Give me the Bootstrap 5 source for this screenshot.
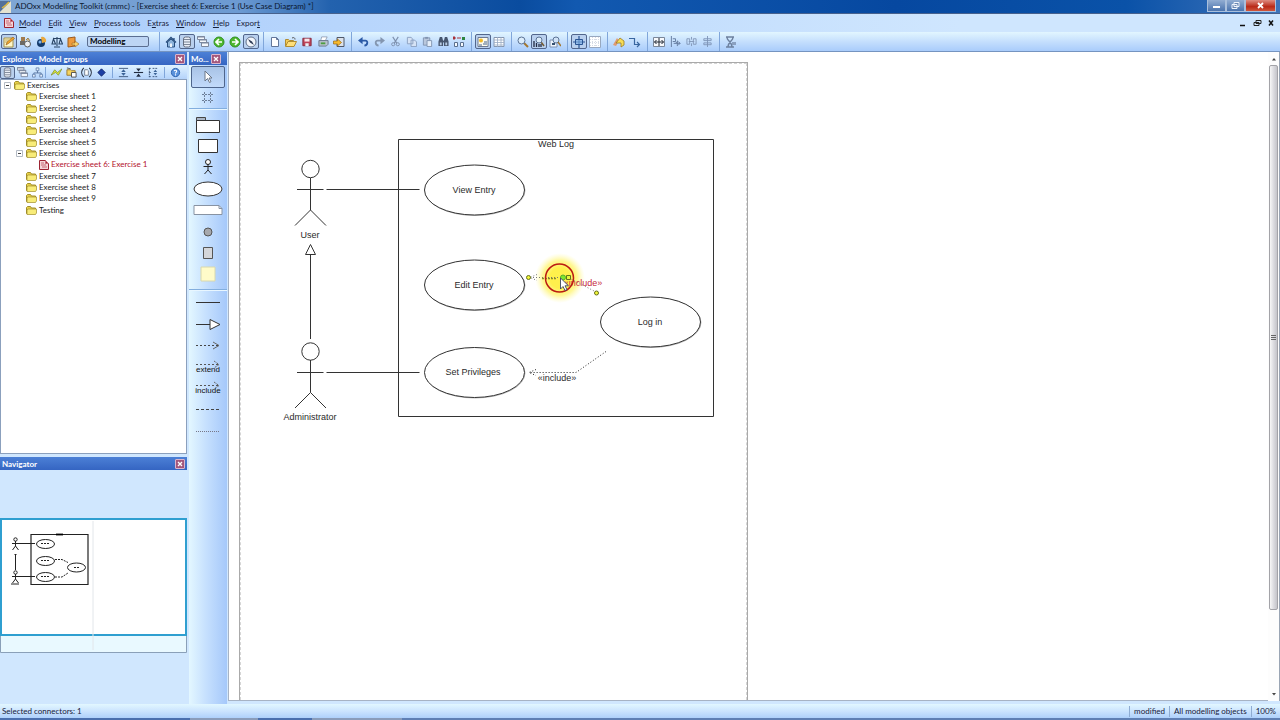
<!DOCTYPE html>
<html lang="en">
<head>
<meta charset="utf-8">
<meta name="viewport" content="width=device-width, initial-scale=1">
<title>ADOxx Modelling Toolkit</title>
<link href="https://cdn.jsdelivr.net/npm/bootstrap@5.3.0/dist/css/bootstrap.min.css" rel="stylesheet">
<style>
  body { font: 8px/11px Lato, "Open Sans", sans-serif; color: #17203a; background: #d0e7fe; }
  svg { display: block; flex: none; }
  button { font: inherit; border: 0; background: none; padding: 0; color: inherit; }
  a { color: inherit; text-decoration: none; }
  .title-strip { height: 14px; background: linear-gradient(90deg, #7fa6d4 0, #6c9ad2 240px, #2362ae 330px, #0a4c9f 520px, #1259b0 45%, #0648a0 70%, #0a52a8 88%, #3f74ba 100%); color: #0c1830; border-bottom: 1px solid #47618d; }
  .win-btn { height: 12px; border: 1px solid #a9bfdc; border-top: 0; background: linear-gradient(#92add2, #4b74ae); }
  .win-close { background: linear-gradient(#de8c80, #b92a18 60%, #d0563c); }
  .menu-strip { height: 18px; background: linear-gradient(90deg, #aaccfb, #cfe6fe 75%); padding-left: 4px; }
  .menu-strip nav { gap: 7px; margin-left: 5px; }
  .tool-strip { height: 20px; background: linear-gradient(#e2f6ff, #c5dffd 50%, #a9ccfb); border-bottom: 1px solid #7594c0; padding-left: 1px; }
  .tb { width: 16px; height: 15px; display: flex; align-items: center; justify-content: center; border-radius: 2px; }
  .tb.on { border: 1px solid #52668c; background: #b9d0ee; }
  .vsep { width: 1px; height: 19px; background: #80a6da; margin: 0 3px 0 4px; }
  .mode-select { width: 62px; height: 11px; margin: 0 10px 0 6px; border: 1px solid #5b6e91; border-radius: 2px; background: #bdd5f4; font: bold 8px/9px Lato, sans-serif; color: #000; padding: 0 0 0 2px; appearance: none; }
  .side { width: 187px; }
  .pane-head { height: 13px; background: linear-gradient(#4c80d6, #3565c2); color: #fff; font-weight: 700; padding: 0 2px; }
  .pane-head span { padding-top: 1px; }
  .x-btn { width: 10px; height: 10px; flex: none; border: 1px solid #d9b6cd; border-radius: 1px; background: #a4577c; display: flex; align-items: center; justify-content: center; }
  .exp-tools { height: 14px; background: linear-gradient(#dff2ff, #b4d3fb); }
  .exp-tools .tb { width: 15px; height: 13px; }
  .exp-tools .vsep { height: 11px; margin: 0 3px; }
  .tree-box { background: #fff; border: 1px solid #8ba0bd; margin-bottom: 3px; }
  .tree { height: 136px; list-style: none; margin: 0; padding: 0 0 0 3px; }
  .tree li { flex: 1 1 0; min-height: 0; display: flex; align-items: center; gap: 2px; color: #222; }
  .tree .lvl1 { padding-left: 12px; }
  .tree .lvl2 { padding-left: 25px; }
  .twist { width: 7px; flex: none; margin-right: 1px; }
  .nav-pane { height: 247px; }
  .nav-map { margin-top: 48px; }
  .palette { width: 38px; margin: 0 1px 0 2px; background: linear-gradient(90deg, #e3f7ff, #c6e0fe 45%, #a5c8fa); }
  .pal-a button, .pal-b button, .pal-c button { display: flex; align-items: center; justify-content: center; width: 100%; flex: 1 1 0; min-height: 0; }
  .pal-a { height: 43px; padding: 1px 2px 0; }
  .pal-b { height: 171px; margin-top: 4px; }
  .pal-c { height: 150px; margin-top: 2px; }
  .palette .picked { border: 1px solid #4f668c; border-radius: 2px; background: linear-gradient(#a8c3e6, #c2dafa); }
  .hsep { height: 1px; background: #82aede; border-bottom: 1px solid #e8f6ff; box-sizing: content-box; }
  .canvas { background: #fff; border: solid #a7b3c4; border-width: 0 0 1px 1px; padding: 10px 0 0 10px; margin-bottom: 3px; }
  .sheet { width: 509px; border: 1px solid #aaa; border-bottom: 0; position: relative; }
  .sheet::before { content: ""; position: absolute; inset: 0; border: 1px dashed #d5d5d5; border-bottom: 0; }
  .sheet text, .pal-c text { font-family: "Liberation Sans", Arial, sans-serif; }
  .vscroll { width: 12px; background: #fdfdfd; border-right: 1px solid #9aa5b4; padding: 5px 1px 4px; margin-bottom: 3px; }
  .thumb { flex: 0 1 545px; width: 100%; border: 1px solid #a3a3a8; border-radius: 2px; background: linear-gradient(90deg, #f7f7f7, #dcdce0 50%, #c4c4ca); }
  .status { height: 14px; padding-top: 1px; background: linear-gradient(#e2f7ff, #c9e2fe 55%, #aed0fb); }
  .status span:first-child { padding-left: 2px; }
  .status span + span { border-left: 1px solid #8eacd3; }
  .task-edge { height: 2px; background: linear-gradient(90deg, #4b6fae 0 190px, #8a9cba 190px 258px, #4b6fae 258px 312px, #8a9cba 312px 402px, #5f7fb4 402px); }
</style>
</head>
<body>
<svg width="0" height="0" class="position-absolute" aria-hidden="true">
  <defs>
    <symbol id="db" viewBox="0 0 12 12"><rect x="2.500" y="1" width="7" height="10" rx="2" fill="#e9eef6" stroke="#666f80"/><path d="M3 3.500h6M3 6h6M3 8.500h6" stroke="#7d8797"/></symbol>
    <symbol id="wins" viewBox="0 0 12 12"><path d="M.500.500h7v3h-7zM2.500 3.500h7v3h-7zM4.500 6.500h7v4h-7z" fill="#f5f8fc" stroke="#7c889e"/><path d="M0 1h8M2 4h8M4 7h8" stroke="#7c889e"/></symbol>
    <symbol id="org" viewBox="0 0 12 12"><path d="M6 4v2.500M2 8V6.500h8V8" fill="none" stroke="#55729c"/><path d="M4.500 1h3v3h-3zM.500 8h3v3h-3zM8.500 8h3v3h-3z" fill="#e4eefb" stroke="#6a88b2"/></symbol>
    <symbol id="edit" viewBox="0 0 12 12"><path d="M1 2h9v9H1z" fill="#fff7c8" stroke="#a59249"/><path d="M3 9l1-3 6-5 1.500 1.500-6 5z" fill="#f2a42a" stroke="#8c5a1c" stroke-width=".6"/><path d="M2 4h4M2 6h2" stroke="#b9a660"/></symbol>
    <symbol id="cubes" viewBox="0 0 12 12"><path d="M2 1h4v4H2z" fill="#a17c4e"/><path d="M1 5h5v4H1z" fill="#6d6a66"/><circle cx="8.500" cy="8" r="3" fill="#f0f2f5" stroke="#5a5a5a"/><path d="M7 4l2-2 2 3" fill="#dbb978" stroke="#7c6234" stroke-width=".7"/></symbol>
    <symbol id="gears" viewBox="0 0 12 12"><circle cx="6" cy="7" r="4" fill="#143a6b"/><path d="M6 1a4 4 0 0 1 5 5L7 7z" fill="#e9a93c"/><circle cx="5" cy="6" r="1.500" fill="#7fb4ed"/></symbol>
    <symbol id="scale" viewBox="0 0 12 12"><path d="M6 1v9M2 2.500h8M3 11h6M2.500 3L1 8h3.500zM9.500 3L8 8h3.500z" fill="none" stroke="#294465" stroke-width="1.100"/></symbol>
    <symbol id="book" viewBox="0 0 12 12"><path d="M1 2l7-1v9l-7 1z" fill="#ee9a3c" stroke="#9c5a1d"/><path d="M5 7h3V5l4 3-4 3V9H5z" fill="#f9d36d" stroke="#9b6727" stroke-width=".6"/></symbol>
    <symbol id="home" viewBox="0 0 12 12"><path d="M1 6.500L6 1.500l5 5M9 2v3" fill="none" stroke="#264c7c" stroke-width="1.300"/><path d="M2.500 6L6 3l3.500 3v5h-7z" fill="#8cb2da" stroke="#264c7c"/><path d="M5 7.500h2V11H5z" fill="#eef4fb"/></symbol>
    <symbol id="back" viewBox="0 0 12 12"><circle cx="6" cy="6" r="5" fill="#4fb82f" stroke="#2f8f1e"/><path d="M9 6H4M6 3L3 6l3 3" fill="none" stroke="#fff" stroke-width="1.700"/></symbol>
    <symbol id="fwd" viewBox="0 0 12 12"><circle cx="6" cy="6" r="5" fill="#4fb82f" stroke="#2f8f1e"/><path d="M3 6h5M6 3l3 3-3 3" fill="none" stroke="#fff" stroke-width="1.700"/></symbol>
    <symbol id="compass" viewBox="0 0 12 12"><circle cx="6" cy="6" r="5" fill="#f2f5fa" stroke="#62728c"/><path d="M3 3l4 2.500L9 9 5 6.500z" fill="#2a3752"/></symbol>
    <symbol id="page" viewBox="0 0 12 12"><path d="M2.500 1.500h5l2 2v7h-7z" fill="#fff" stroke="#63779a"/><path d="M7.500 1.500v2h2" fill="none" stroke="#63779a"/></symbol>
    <symbol id="open" viewBox="0 0 12 12"><path d="M.500 10V3.500h3l1 1h4V6" fill="#f3cc57" stroke="#b08c34"/><path d="M.500 10.500l2.500-5h8.500l-2.500 5z" fill="#ffdf7a" stroke="#b08c34"/><path d="M7 2c2-1 3 0 3 1.500" fill="none" stroke="#555"/></symbol>
    <symbol id="save" viewBox="0 0 12 12"><path d="M1 1.500h10v9H1z" fill="#bf4459" stroke="#7f2335"/><path d="M3 2h6v3.500H3z" fill="#f5e6ea"/><path d="M4 7.500h4V11H4z" fill="#e9eef4"/></symbol>
    <symbol id="print" viewBox="0 0 12 12"><path d="M4 1h6L8 5H3z" fill="#fff" stroke="#77839a" stroke-width=".7"/><path d="M1 5h10v4l-2 2H1z" fill="#b9c2ce" stroke="#67758a"/><path d="M3 8h5" stroke="#4d9e40" stroke-width="2"/></symbol>
    <symbol id="export" viewBox="0 0 12 12"><path d="M4 1.500h7v9H4z" fill="#dbe2ec" stroke="#4f5868"/><path d="M.500 5h4V3l4 3.500-4 3.500V8h-4z" fill="#f6b92d" stroke="#9a6812" stroke-width=".7"/></symbol>
    <symbol id="undo" viewBox="0 0 12 12"><path d="M4 5h4c3 0 3 5-1 5.500" fill="none" stroke="#2c5aa6" stroke-width="2"/><path d="M0 5l5-4v8z" fill="#2c5aa6"/></symbol>
    <symbol id="redo" viewBox="0 0 12 12"><path d="M8 5H4c-3 0-3 5 1 5.500" fill="none" stroke="#8496b0" stroke-width="2"/><path d="M12 5L7 1v8z" fill="#8496b0"/></symbol>
    <symbol id="cut" viewBox="0 0 12 12"><path d="M3 1l4.500 7M9 1L4.500 8" stroke="#7d8fac" stroke-width="1.200"/><circle cx="3.500" cy="9" r="1.700" fill="none" stroke="#7d8fac"/><circle cx="8.500" cy="9" r="1.700" fill="none" stroke="#7d8fac"/></symbol>
    <symbol id="copy" viewBox="0 0 12 12"><path d="M1.500 1.500h4l2 2v5h-6zM5.500 4.500h4l2 2v5h-6z" fill="#d6e3f5" stroke="#8ba0c0"/></symbol>
    <symbol id="paste" viewBox="0 0 12 12"><path d="M1.500 2h7v8h-7z" fill="#b9c7dc" stroke="#8194b0"/><path d="M3.500 1h3v2h-3z" fill="#8194b0"/><path d="M5.500 5h5v6.500h-5z" fill="#e6effa" stroke="#8194b0"/></symbol>
    <symbol id="find" viewBox="0 0 12 12"><path d="M2 1h2.500l1 4v6H.500V6zM10 1H7.500l-1 4v6h5V6z" fill="#47566e"/><path d="M2 7h2v3H2zM8 7h2v3H8z" fill="#b9cbe2"/><path d="M5 5h2v2H5z" fill="#47566e"/></symbol>
    <symbol id="swap" viewBox="0 0 12 12"><path d="M0 1h2v2H0zM4 2h4" fill="#a83238" stroke="#a83238"/><path d="M9 1h3v3H9z" fill="#2e8540"/><path d="M1.500 6.500h3v4h-3zM7.500 6.500h3v4h-3z" fill="#f7fafd" stroke="#5b708e"/></symbol>
    <symbol id="image" viewBox="0 0 12 12"><path d="M1 1.500h10v9H1z" fill="#fdfbec" stroke="#6d7a92"/><circle cx="4" cy="4.500" r="2" fill="#f2ba27"/><path d="M6 8h4M7 6h3M2 9h3" stroke="#45638c"/></symbol>
    <symbol id="grid" viewBox="0 0 12 12"><path d="M1 1.500h10v9H1z" fill="#fff" stroke="#8696ae"/><path d="M1 4h10M1 6.500h10M1 9h10M4.500 1v10M8 1v10" stroke="#9aabc3" stroke-width=".8"/></symbol>
    <symbol id="lens" viewBox="0 0 12 12"><path d="M7 7l4 4" stroke="#a3762f" stroke-width="2"/><circle cx="4.500" cy="4.500" r="3.500" fill="#dcedfb" stroke="#5d7495"/></symbol>
    <symbol id="lensbars" viewBox="0 0 12 12"><path d="M8 6l3 4" stroke="#745b34" stroke-width="1.500"/><circle cx="6" cy="4" r="3" fill="#dcedfb" stroke="#5d7495"/><path d="M1 11V5M3.500 11V7M6 11V8M8 11V8" stroke="#222c44" stroke-width="1.300"/></symbol>
    <symbol id="lensfit" viewBox="0 0 12 12"><path d="M1 4h7v7H1z" fill="#eef4fc" stroke="#8193b0"/><circle cx="7" cy="4" r="3" fill="#cfe2f7" stroke="#5d7495"/><path d="M9 6l3 4" stroke="#a3762f" stroke-width="1.500"/><path d="M3 7h3v2H3z" fill="#36506f"/></symbol>
    <symbol id="cross" viewBox="0 0 12 12"><path d="M6 0v12M0 6h12" stroke="#2a5593" stroke-width="1.200"/><path d="M2.500 3.500h7v5h-7z" fill="#7fb0e6" fill-opacity=".6" stroke="#2a5593"/></symbol>
    <symbol id="dots" viewBox="0 0 12 12"><path d="M.500.500h11v11H.500z" fill="#fff" stroke="#98a8bf"/><path d="M3.500 1v10M6.500 1v10M9.500 1v10M1 3.500h10M1 6.500h10M1 9.500h10" stroke="#d5dbe5" stroke-dasharray="1"/></symbol>
    <symbol id="paint" viewBox="0 0 12 12"><path d="M0 9l4-7 2 3-3 5z" fill="#e09a72"/><path d="M3 7l4-5 4 3v4l-3 2V7z" fill="#f7dc55" stroke="#9a7b22" stroke-width=".8"/></symbol>
    <symbol id="elbow" viewBox="0 0 12 12"><path d="M0 2.500h5.500v6H10M8 6l2.500 2.500L8 11" fill="none" stroke="#39669f" stroke-width="1.200"/></symbol>
    <symbol id="alignw" viewBox="0 0 12 12"><path d="M.500 1.500h11v9H.500z" fill="#f7f9fc" stroke="#7a8799"/><path d="M6 2v8M1.500 6h9M3.500 4L1.500 6l2 2M8.500 4l2 2-2 2" fill="none" stroke="#1f2633"/></symbol>
    <symbol id="alignl" viewBox="0 0 12 12"><path d="M1.500 0v12M3 3h3v3H3M4 8h7M8 5v6M6 8l2-2M9 6l2 2-2 2" fill="none" stroke="#60789c"/></symbol>
    <symbol id="alignc" viewBox="0 0 12 12"><path d="M1 3h3v6H1zM8 3h3v6H8zM6 1v3M6 8v3M3 6h6" fill="none" stroke="#8297b8"/></symbol>
    <symbol id="alignm" viewBox="0 0 12 12"><path d="M6 0v12M2 3h8v2H2zM2 7.500h8v2H2z" fill="none" stroke="#7f95b8"/></symbol>
    <symbol id="glass" viewBox="0 0 12 12"><path d="M1 1h8M1 11h8M2 1.500c0 3 5 5 5 9M8 1.500c0 3-5 5-5 9" fill="none" stroke="#6d819f" stroke-width="1.400"/><path d="M7 6h4v3H7z" fill="#8aa0c0"/></symbol>
    <symbol id="bolt" viewBox="0 0 12 12"><path d="M0 9l4-6 3 3 5-4-4 7-3-3z" fill="#d7e03b" stroke="#73882b" stroke-width=".7"/></symbol>
    <symbol id="foldcfg" viewBox="0 0 12 12"><path d="M1 3h4l1 1h4v5H1z" fill="#f5d35f" stroke="#98782f"/><path d="M6 6h5v5H6z" fill="#fff" stroke="#4d4d4d"/><path d="M1 1l4 1" stroke="#555"/></symbol>
    <symbol id="paren" viewBox="0 0 12 12"><path d="M3 1C0 4 0 8 3 11M9 1c3 3 3 7 0 10" fill="none" stroke="#28303f" stroke-width="1.200"/><path d="M4 3h3l1 1v5H4z" fill="#fff" stroke="#596374" stroke-width=".8"/></symbol>
    <symbol id="gem" viewBox="0 0 12 12"><path d="M6 2l4 4-4 4-4-4z" fill="#1c3fa4" stroke="#12266b"/></symbol>
    <symbol id="expand" viewBox="0 0 12 12"><path d="M1 1.500h10M1 10.500h10" stroke="#3c567c"/><path d="M6 2.500l2.500 3h-5zM6 9.500l2.500-3h-5z" fill="#3b6397"/></symbol>
    <symbol id="collapse" viewBox="0 0 12 12"><path d="M1 6h10" stroke="#222c40" stroke-width="1.200"/><path d="M6 5l2.500-3.500h-5zM6 7l2.500 3.500h-5z" fill="#222c40"/></symbol>
    <symbol id="expsome" viewBox="0 0 12 12"><path d="M1.500 1v10M1 1.500h2M1 6h2M1 10.500h2M5 1.500h6M5 10.500h6" stroke="#3c567c" stroke-dasharray="2 1"/><path d="M8 3l2 2.500H6zM8 9l2-2.500H6z" fill="#3b6397"/></symbol>
    <symbol id="help" viewBox="0 0 12 12"><circle cx="6" cy="6" r="4.500" fill="#5a92dc" stroke="#2a5eab"/><path d="M4.500 4.500C5 3 7.500 3.300 7.200 5 7 6 6 6 6 7M6 8v1.200" fill="none" stroke="#fff" stroke-width="1.200"/></symbol>
    <symbol id="folder" viewBox="0 0 11 9"><path d="M.500 7.500v-6l1-1h3l1 1.500h4v5.500z" fill="#e7cf46" stroke="#a08e2c"/><path d="M1 8.500V4l1-1h8.500v4l-1 1.500z" fill="#f8ec78" stroke="#a08e2c" stroke-width=".7"/></symbol>
    <symbol id="model" viewBox="0 0 10 10"><path d="M.500.500h6l3 3v6h-9z" fill="#f4d5d8" stroke="#9c2332"/><path d="M6.500.500v3h3zM2 3h3M2 5h5M3 7h5" fill="#9c2332" stroke="#c76b76"/></symbol>
    <symbol id="minus" viewBox="0 0 7 7"><path d="M.500.500h6v6h-6z" fill="#fff" stroke="#b4bbc4"/><path d="M2 3.500h3" stroke="#444"/></symbol>
    <symbol id="xx" viewBox="0 0 6 6"><path d="M1 1l4 4M5 1L1 5" stroke="#fff" stroke-width="1.300"/></symbol>
  </defs>
</svg>

<div class="vh-100 d-flex flex-column overflow-hidden">
  <header>
    <div class="title-strip d-flex align-items-center">
      <svg class="me-1" width="11" height="12" viewBox="0 0 11 12"><path d="M0 0h11L0 11z" fill="#53709a"/><path d="M0 11L11 0v12H0z" fill="#e5e2cf"/><path d="M2 7l4-3 3-3" stroke="#e1b93c" stroke-width="1.500" fill="none"/></svg>
      <span class="flex-grow-1 text-nowrap">ADOxx Modelling Toolkit (cmmc) - [Exercise sheet 6: Exercise 1 (Use Case Diagram) *]</span>
      <div class="d-flex align-self-start me-1">
        <button class="win-btn" aria-label="Minimize"><svg width="17" height="11"><path d="M5 7h7" stroke="#fff" stroke-width="2"/></svg></button>
        <button class="win-btn" aria-label="Restore"><svg width="17" height="11"><path d="M7 2.500h5v4H7zM5 4.500h5v4H5z" fill="#6c88b4" stroke="#eef3fa"/></svg></button>
        <button class="win-btn win-close" aria-label="Close"><svg width="29" height="11"><path d="M12 3l5 5M17 3l-5 5" stroke="#fff" stroke-width="1.800"/></svg></button>
      </div>
    </div>
    <div class="menu-strip d-flex align-items-center">
      <svg width="10" height="10"><use href="#model"/></svg>
      <nav class="d-flex flex-grow-1" aria-label="Main menu">
        <a href="#"><u>M</u>odel</a><a href="#"><u>E</u>dit</a><a href="#"><u>V</u>iew</a><a href="#"><u>P</u>rocess tools</a><a href="#">E<u>x</u>tras</a><a href="#"><u>W</u>indow</a><a href="#"><u>H</u>elp</a><a href="#">Expor<u>t</u></a>
      </nav>
      <div class="d-flex gap-1 pe-1 text-black">
        <button aria-label="Minimize model"><svg width="10" height="10"><path d="M2 7.500h5" stroke="#111" stroke-width="1.500"/></svg></button>
        <button aria-label="Restore model"><svg width="10" height="10"><path d="M4 2.500h5v3H4zM2 4.500h5v3H2z" fill="#cfe6fe" stroke="#222"/></svg></button>
        <button aria-label="Close model"><svg width="10" height="10"><path d="M3 2.500l4 5M7 2.500l-4 5" stroke="#111" stroke-width="1.500"/></svg></button>
      </div>
    </div>
    <div class="tool-strip d-flex align-items-center">
      <button class="tb on" aria-label="Modelling"><svg width="12" height="12"><use href="#edit"/></svg></button>
      <button class="tb" aria-label="Analysis"><svg width="12" height="12"><use href="#cubes"/></svg></button>
      <button class="tb" aria-label="Simulation"><svg width="12" height="12"><use href="#gears"/></svg></button>
      <button class="tb" aria-label="Evaluation"><svg width="12" height="12"><use href="#scale"/></svg></button>
      <button class="tb" aria-label="Import and export"><svg width="12" height="12"><use href="#book"/></svg></button>
      <select class="mode-select" aria-label="Component"><option>Modelling</option></select>
      <span class="vsep ms-0"></span>
      <button class="tb" aria-label="Home"><svg width="12" height="12"><use href="#home"/></svg></button>
      <button class="tb on" aria-label="Explorer"><svg width="12" height="12"><use href="#db"/></svg></button>
      <button class="tb" aria-label="Windows"><svg width="12" height="12"><use href="#wins"/></svg></button>
      <button class="tb" aria-label="Back"><svg width="12" height="12"><use href="#back"/></svg></button>
      <button class="tb" aria-label="Forward"><svg width="12" height="12"><use href="#fwd"/></svg></button>
      <button class="tb on" aria-label="Navigator"><svg width="12" height="12"><use href="#compass"/></svg></button>
      <span class="vsep"></span>
      <button class="tb" aria-label="New"><svg width="12" height="12"><use href="#page"/></svg></button>
      <button class="tb" aria-label="Open"><svg width="12" height="12"><use href="#open"/></svg></button>
      <button class="tb" aria-label="Save"><svg width="10" height="10"><use href="#save"/></svg></button>
      <button class="tb" aria-label="Print"><svg width="11" height="11"><use href="#print"/></svg></button>
      <button class="tb" aria-label="Export"><svg width="12" height="12"><use href="#export"/></svg></button>
      <span class="vsep"></span>
      <button class="tb" aria-label="Undo"><svg width="11" height="11"><use href="#undo"/></svg></button>
      <button class="tb" aria-label="Redo"><svg width="11" height="11"><use href="#redo"/></svg></button>
      <button class="tb" aria-label="Cut"><svg width="11" height="11"><use href="#cut"/></svg></button>
      <button class="tb" aria-label="Copy"><svg width="11" height="11"><use href="#copy"/></svg></button>
      <button class="tb" aria-label="Paste"><svg width="11" height="11"><use href="#paste"/></svg></button>
      <button class="tb" aria-label="Find"><svg width="11" height="11"><use href="#find"/></svg></button>
      <button class="tb" aria-label="Replace"><svg width="12" height="12"><use href="#swap"/></svg></button>
      <span class="vsep"></span>
      <button class="tb on" aria-label="Graphic view"><svg width="12" height="12"><use href="#image"/></svg></button>
      <button class="tb" aria-label="Table view"><svg width="12" height="12"><use href="#grid"/></svg></button>
      <span class="vsep"></span>
      <button class="tb" aria-label="Zoom"><svg width="12" height="12"><use href="#lens"/></svg></button>
      <button class="tb on" aria-label="Zoom level"><svg width="12" height="12"><use href="#lensbars"/></svg></button>
      <button class="tb" aria-label="Fit"><svg width="12" height="12"><use href="#lensfit"/></svg></button>
      <span class="vsep"></span>
      <button class="tb on" aria-label="Crosshair"><svg width="12" height="12"><use href="#cross"/></svg></button>
      <button class="tb" aria-label="Grid"><svg width="12" height="12"><use href="#dots"/></svg></button>
      <span class="vsep"></span>
      <button class="tb" aria-label="Colour"><svg width="12" height="12"><use href="#paint"/></svg></button>
      <button class="tb" aria-label="Right angles"><svg width="12" height="12"><use href="#elbow"/></svg></button>
      <span class="vsep"></span>
      <button class="tb" aria-label="Spread"><svg width="12" height="12"><use href="#alignw"/></svg></button>
      <button class="tb" aria-label="Align left"><svg width="11" height="11"><use href="#alignl"/></svg></button>
      <button class="tb" aria-label="Align centre"><svg width="11" height="11"><use href="#alignc"/></svg></button>
      <button class="tb" aria-label="Align middle"><svg width="11" height="11"><use href="#alignm"/></svg></button>
      <span class="vsep"></span>
      <button class="tb" aria-label="Wait"><svg width="12" height="12"><use href="#glass"/></svg></button>
    </div>
  </header>

  <div class="d-flex flex-grow-1" style="min-height:0">
    <aside class="side d-flex flex-column flex-shrink-0">
      <section class="d-flex flex-column flex-grow-1">
        <div class="pane-head d-flex align-items-center justify-content-between"><span>Explorer - Model groups</span><button class="x-btn" aria-label="Close explorer"><svg width="6" height="6"><use href="#xx"/></svg></button></div>
        <div class="exp-tools d-flex align-items-center">
          <button class="tb on" aria-label="Groups"><svg width="11" height="11"><use href="#db"/></svg></button>
          <button class="tb" aria-label="Open models"><svg width="11" height="11"><use href="#wins"/></svg></button>
          <button class="tb" aria-label="Hierarchy"><svg width="11" height="11"><use href="#org"/></svg></button>
          <span class="vsep ms-0"></span>
          <button class="tb" aria-label="Refresh"><svg width="11" height="11"><use href="#bolt"/></svg></button>
          <button class="tb" aria-label="Group settings"><svg width="11" height="11"><use href="#foldcfg"/></svg></button>
          <button class="tb" aria-label="Versions"><svg width="11" height="11"><use href="#paren"/></svg></button>
          <button class="tb" aria-label="Filter"><svg width="11" height="11"><use href="#gem"/></svg></button>
          <span class="vsep"></span>
          <button class="tb" aria-label="Expand"><svg width="11" height="11"><use href="#expand"/></svg></button>
          <button class="tb" aria-label="Collapse"><svg width="11" height="11"><use href="#collapse"/></svg></button>
          <button class="tb" aria-label="Expand all"><svg width="11" height="11"><use href="#expsome"/></svg></button>
          <span class="vsep"></span>
          <button class="tb" aria-label="Help"><svg width="11" height="11"><use href="#help"/></svg></button>
        </div>
        <div class="tree-box flex-grow-1">
          <ul class="tree d-flex flex-column">
            <li><svg class="twist" height="7"><use href="#minus"/></svg><svg width="11" height="9"><use href="#folder"/></svg>Exercises</li>
            <li class="lvl1"><span class="twist"></span><svg width="11" height="9"><use href="#folder"/></svg>Exercise sheet 1</li>
            <li class="lvl1"><span class="twist"></span><svg width="11" height="9"><use href="#folder"/></svg>Exercise sheet 2</li>
            <li class="lvl1"><span class="twist"></span><svg width="11" height="9"><use href="#folder"/></svg>Exercise sheet 3</li>
            <li class="lvl1"><span class="twist"></span><svg width="11" height="9"><use href="#folder"/></svg>Exercise sheet 4</li>
            <li class="lvl1"><span class="twist"></span><svg width="11" height="9"><use href="#folder"/></svg>Exercise sheet 5</li>
            <li class="lvl1"><svg class="twist" height="7"><use href="#minus"/></svg><svg width="11" height="9"><use href="#folder"/></svg>Exercise sheet 6</li>
            <li class="lvl2" style="color:#b3122c"><span class="twist"></span><svg width="10" height="10"><use href="#model"/></svg>Exercise sheet 6: Exercise 1</li>
            <li class="lvl1"><span class="twist"></span><svg width="11" height="9"><use href="#folder"/></svg>Exercise sheet 7</li>
            <li class="lvl1"><span class="twist"></span><svg width="11" height="9"><use href="#folder"/></svg>Exercise sheet 8</li>
            <li class="lvl1"><span class="twist"></span><svg width="11" height="9"><use href="#folder"/></svg>Exercise sheet 9</li>
            <li class="lvl1"><span class="twist"></span><svg width="11" height="9"><use href="#folder"/></svg>Testing</li>
          </ul>
        </div>
      </section>
      <section class="nav-pane">
        <div class="pane-head d-flex align-items-center justify-content-between"><span>Navigator</span><button class="x-btn" aria-label="Close navigator"><svg width="6" height="6"><use href="#xx"/></svg></button></div>
        <svg class="nav-map" width="187" height="135" viewBox="0 518 187 135" fill="none" stroke="#222" aria-label="Model overview">
          <path d="M.5 635v17.500h186V635" fill="#e9f9ff" stroke="#8aa0b8"/>
          <path d="M1 519h185v116H1z" fill="#fff" stroke="#2f9fd0" stroke-width="2"/>
          <path d="M93 521v129" stroke="#e2e6ea"/>
          <path d="M31 534.500h57v50H31z" stroke-width="1.200"/>
          <path d="M56 534.500h7" stroke-width="1.800" stroke="#000"/>
          <ellipse cx="45.500" cy="544" rx="9" ry="4.500"/><ellipse cx="45.500" cy="561" rx="9" ry="4.500"/><ellipse cx="45.500" cy="577" rx="9" ry="4.500"/><ellipse cx="76.500" cy="567.500" rx="9" ry="4.500"/>
          <path d="M41 543.500h8M41 560.500h8M41 576.500h8M74 567.500h5" stroke-dasharray="2 1"/>
          <path d="M55 559.500h7l6 3M55 577h7l6-4" stroke-dasharray="2 1"/>
          <path d="M19 543.500h16M19 576.500h16M15.500 555v15M14.500 554.500h2" />
          <circle cx="15.500" cy="539.500" r="1.700"/><path d="M12 543.500h7M15.500 541v5l-3 4M15.500 546l3 4"/>
          <circle cx="15.500" cy="572.500" r="1.700"/><path d="M12 576.500h7M15.500 574v5l-3 4M15.500 579l3 4M11 584h8"/>
        </svg>
      </section>
    </aside>

    <aside class="palette d-flex flex-column flex-shrink-0">
      <div class="pane-head d-flex align-items-center justify-content-between"><span>Mo...</span><button class="x-btn me-1" aria-label="Close palette"><svg width="6" height="6"><use href="#xx"/></svg></button></div>
      <div class="pal-a d-flex flex-column">
        <button class="picked" aria-label="Select"><svg width="12" height="14"><path d="M3 1v10l2.500-2.500 2 4 1.500-.8-2-3.700h3z" fill="#fff" stroke="#6b7788"/></svg></button>
        <button aria-label="Frame"><svg width="14" height="14"><path d="M3.500 1v12M9.500 1v12M1 3.500h12M1 9.500h12" stroke="#6d7f99" stroke-dasharray="2 1"/></svg></button>
      </div>
      <div class="hsep"></div>
      <div class="pal-b d-flex flex-column">
        <button aria-label="Package"><svg width="26" height="18"><path d="M1.500 1.500h9v3h-9z" fill="#aab6c6" stroke="#444"/><path d="M1.500 4.500h23v12h-23z" fill="#fff" stroke="#333"/></svg></button>
        <button aria-label="System boundary"><svg width="22" height="16"><path d="M1.500 1.500h19v13h-19z" fill="#fff" stroke="#333"/></svg></button>
        <button aria-label="Actor"><svg width="12" height="18"><circle cx="6" cy="4" r="2.500" fill="#fff" stroke="#222"/><path d="M1.500 8.500h9M6 6v6l-3.500 4M6 12l3.500 4" stroke="#222" fill="none"/></svg></button>
        <button aria-label="Use case"><svg width="30" height="16"><ellipse cx="15" cy="8" rx="14" ry="7" fill="#fff" stroke="#333"/></svg></button>
        <button aria-label="Note"><svg width="30" height="12"><path d="M1 1.500h25l3 3v6H1z" fill="#fff" stroke="#8893a2"/><path d="M26 1.500v3h3" fill="none" stroke="#8893a2"/></svg></button>
        <button aria-label="Point"><svg width="10" height="10"><circle cx="5" cy="5" r="4" fill="#a6a8ad" stroke="#555"/></svg></button>
        <button aria-label="Object"><svg width="12" height="14"><path d="M1.500 1.500h9v11h-9z" fill="#d4d6da" stroke="#555"/></svg></button>
        <button aria-label="Comment"><svg width="16" height="16"><path d="M1 1h14v14H1z" fill="#fffbc9" stroke="#d8d8ae"/></svg></button>
      </div>
      <div class="hsep mt-1"></div>
      <div class="pal-c d-flex flex-column">
        <button aria-label="Association"><svg width="26" height="12"><path d="M1 4.500h24" stroke="#333"/></svg></button>
        <button aria-label="Generalization"><svg width="26" height="12"><path d="M1 5.500h14" stroke="#333"/><path d="M15 .5l10 5-10 5z" fill="#fff" stroke="#333"/></svg></button>
        <button aria-label="Dependency"><svg width="26" height="12"><path d="M1 4.500h22" stroke="#444" stroke-dasharray="2 2"/><path d="M18 1l6 3.500L18 8" fill="none" stroke="#666"/></svg></button>
        <button><svg width="28" height="16"><path d="M2 4.500h22" stroke="#555" stroke-dasharray="2 2"/><path d="M20 1l5 3.500-5 3.500" fill="none" stroke="#666" stroke-dasharray="2 1"/><text x="14" y="12" font-size="8" text-anchor="middle" fill="#111">extend</text></svg></button>
        <button><svg width="28" height="16"><path d="M2 4.500h22" stroke="#555" stroke-dasharray="2 2"/><path d="M20 1l5 3.500-5 3.500" fill="none" stroke="#666" stroke-dasharray="2 1"/><text x="14" y="12" font-size="8" text-anchor="middle" fill="#111">include</text></svg></button>
        <button aria-label="Dashed line"><svg width="26" height="10"><path d="M1 3.500h24" stroke="#444" stroke-dasharray="3 2"/></svg></button>
        <button aria-label="Dotted line"><svg width="26" height="10"><path d="M1 4.500h24" stroke="#778" stroke-dasharray="1 1"/></svg></button>
      </div>
    </aside>

    <main class="canvas d-flex flex-grow-1 overflow-hidden">
      <div class="sheet flex-shrink-0">
        <svg width="507" height="640" viewBox="240 63 507 640" fill="none" stroke="#333">
          <path d="M398.500 139.500h315v277h-315z"/>
          <g stroke="#bbb"><ellipse cx="475" cy="190.500" rx="50" ry="25"/><ellipse cx="475" cy="285.500" rx="50" ry="25"/><ellipse cx="475" cy="373" rx="50" ry="25"/><ellipse cx="651" cy="322.500" rx="50" ry="25"/></g>
          <g fill="#fff"><ellipse cx="474.500" cy="190" rx="50" ry="25"/><ellipse cx="474.500" cy="285" rx="50" ry="25"/><ellipse cx="474.500" cy="372.500" rx="50" ry="25"/><ellipse cx="650.500" cy="322" rx="50" ry="25"/>
          <circle cx="310.500" cy="169" r="8.700"/><circle cx="310.500" cy="351.500" r="8.700"/></g>
          <path d="M310.500 178v32l-15.500 15.500M310.500 210l15.500 15.500M297 189.500h26.500M326.500 189.500h93"/>
          <path d="M310.500 360v32.500L295 408M310.500 392.500L326 408M297 372.500h26.500M326.500 372.500h93"/>
          <path d="M310.500 254.500V339M310.500 244.500l5 10h-10z"/>
          <g stroke-dasharray="1 2" stroke="#222"><path d="M606 351.500l-30 21h-47"/><path d="M536 369.500l-7 3 7 3"/></g>
          <defs><radialGradient id="glow"><stop offset=".4" stop-color="#fff04c"/><stop offset=".7" stop-color="#fff57c" stop-opacity=".8"/><stop offset="1" stop-color="#fffbb0" stop-opacity="0"/></radialGradient></defs>
          <circle cx="560" cy="278" r="25" fill="url(#glow)" stroke="none"/>
          <g stroke="#777" stroke-dasharray="1 2"><path d="M530 277.500h38l29 15"/><path d="M537 274.500l-7 3 7 3"/></g>
          <circle cx="528.500" cy="277.500" r="2" fill="#f3f73a" stroke="#66701a"/><circle cx="596.500" cy="293" r="2" fill="#f3f73a" stroke="#66701a"/>
          <circle cx="563" cy="277.500" r="2.500" fill="#7ee82c" stroke="#5cae2c"/><path d="M566.500 275.500h4v4h-4z" fill="#e6f43a" stroke="#60761b"/>
          <g stroke="none" fill="#2a2a2a" font-size="9" text-anchor="middle">
            <text x="556" y="147">Web Log</text><text x="474" y="193">View Entry</text><text x="474" y="288">Edit Entry</text><text x="473" y="375">Set Privileges</text><text x="650" y="325">Log in</text>
            <text x="310" y="238">User</text><text x="310" y="420">Administrator</text><text x="557" y="381">«include»</text>
            <text x="583" y="286" fill="#c62a3c">«include»</text>
          </g>
          <path d="M542 278.500h14" stroke="#8b8b2a" stroke-width="1.500" stroke-dasharray="2 1"/>
          <circle cx="559.500" cy="278" r="14" stroke="#bb1a12" stroke-width="1.500"/>
          <path d="M560.500 278v11l2.500-2.500 2 4 2-.9-2-3.800h3.500z" fill="#fff" stroke="#3c4460" stroke-width=".9"/>
        </svg>
      </div>
    </main>
    <div class="vscroll d-flex flex-column align-items-center justify-content-between flex-shrink-0">
      <svg width="6" height="4"><path d="M1 3.500l2-2.500 2 2.500z" fill="#444"/></svg>
      <div class="thumb d-flex align-items-center justify-content-center mt-1 mb-auto"><svg width="5" height="6"><path d="M0 .5h5M0 2.500h5M0 4.500h5" stroke="#666"/></svg></div>
      <svg width="6" height="4"><path d="M1 0l2 2.500L5 0z" fill="#444"/></svg>
    </div>
  </div>

  <footer>
    <div class="status d-flex align-items-center"><span class="flex-grow-1">Selected connectors: 1</span><span class="px-1">modified</span><span class="px-1">All modelling objects</span><span class="px-1">100%</span></div>
    <div class="task-edge"></div>
  </footer>
</div>
<script src="https://cdn.jsdelivr.net/npm/bootstrap@5.3.0/dist/js/bootstrap.bundle.min.js"></script>
</body>
</html>
